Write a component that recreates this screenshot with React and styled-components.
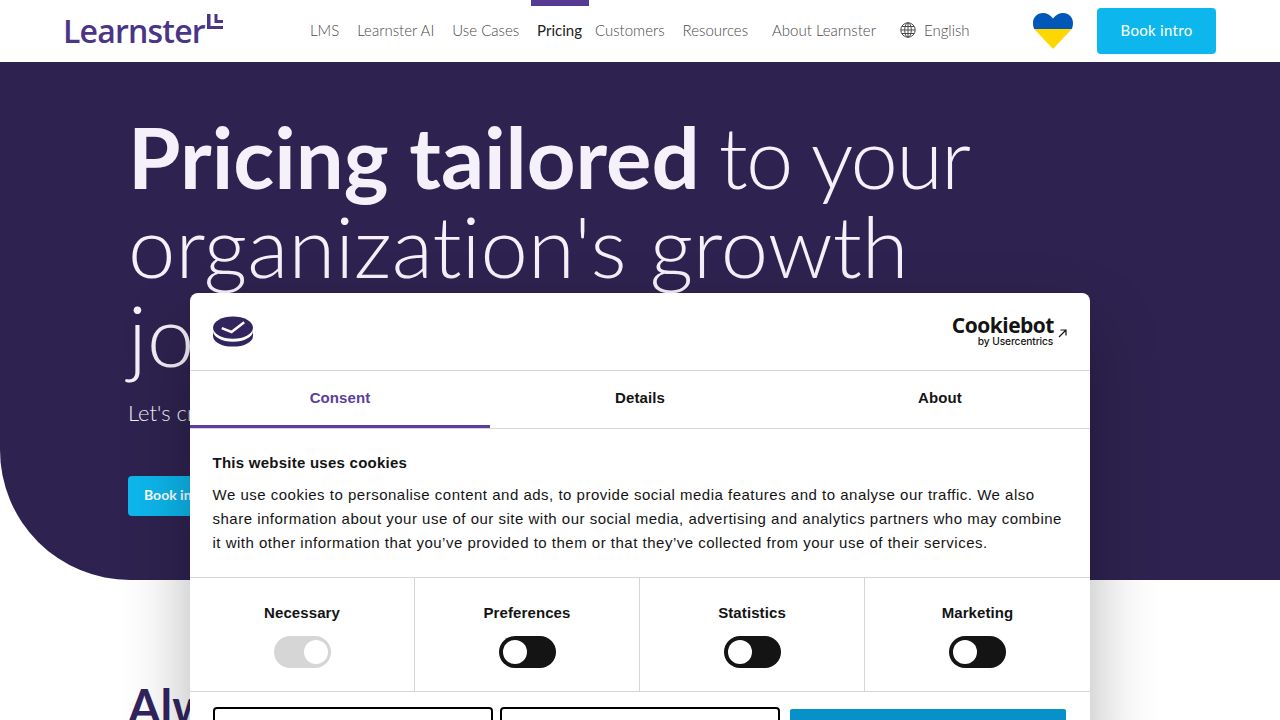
import React from "react";
import styled, { createGlobalStyle } from "styled-components";

const GlobalStyle = createGlobalStyle`
  html, body {
    margin: 0;
    padding: 0;
    height: 100%;
    overflow: hidden;
    background: #fff;
    font-family: "Lato", "Open Sans", sans-serif;
    font-variant-ligatures: none;
  }
  * {
    box-sizing: border-box;
  }
`;

const navItems = [
  { label: "LMS" },
  { label: "Learnster AI" },
  { label: "Use Cases" },
  { label: "Pricing", active: true },
  { label: "Customers" },
  { label: "Resources" },
  { label: "About Learnster", wide: true },
];

const tabs = [
  { label: "Consent", active: true },
  { label: "Details" },
  { label: "About" },
];

const consents = [
  { label: "Necessary", locked: true },
  { label: "Preferences" },
  { label: "Statistics" },
  { label: "Marketing" },
];

const LogoMark = () => (
  <MarkSvg width="16" height="15" viewBox="0 0 16 15">
    <path d="M0 0h3.500v12H16v3H0z" fill="#4b3586" />
    <path d="M7.500 0h3v6H16v3H7.500z" fill="#4b3586" />
  </MarkSvg>
);

const GlobeIcon = () => (
  <svg width="16" height="16" viewBox="0 0 16 16" fill="none" stroke="#4a4a4a" strokeWidth="1">
    <circle cx="8" cy="8" r="7.200" />
    <ellipse cx="8" cy="8" rx="3.300" ry="7.200" />
    <path d="M8 .8v14.400M.8 8h14.400M1.800 4.500h12.400M1.800 11.500h12.400" />
  </svg>
);

const HeartFlag = () => (
  <svg width="40" height="36" viewBox="0 0 40 36">
    <path
      d="M20 5.500C17 1.500 13.500 0 10 0 4 0 0 4.500 0 10c0 2.500.5 4.300 1.200 6H38.800c.7-1.700 1.200-3.500 1.200-6C40 4.500 36 0 30 0c-3.500 0-7 1.500-10 5.500z"
      fill="#0057b8"
    />
    <path d="M1.200 16H38.800L20 36z" fill="#ffd700" />
  </svg>
);

const CookieMark = () => (
  <svg width="40" height="31" viewBox="0 0 41 31">
    <path d="M0 15v5c0 6 9 11 20.500 11S41 26 41 20v-5c0 6-9 11-20.500 11S0 21 0 15z" fill="#32245f" />
    <ellipse cx="20.500" cy="11.500" rx="20.500" ry="11.500" fill="#32245f" />
    <path d="M9 12l10 4L32 6" fill="none" stroke="#fff" strokeWidth="2.500" />
  </svg>
);

const App = () => (
  <Page>
    <GlobalStyle />
    <Header>
      <Logo>
        <LogoText>Learnster</LogoText>
        <LogoMark />
      </Logo>
      <Nav>
        {navItems.map((item) => (
          <NavLink key={item.label} $active={item.active} $wide={item.wide}>
            {item.label}
          </NavLink>
        ))}
      </Nav>
      <Language>
        <GlobeIcon />
        <span>English</span>
      </Language>
      <Flag>
        <HeartFlag />
      </Flag>
      <HeaderButton>Book intro</HeaderButton>
    </Header>
    <Hero>
      <HeroTitle>
        <strong>Pricing tailored</strong> <TitleTail>to your</TitleTail> organization's growth journey
      </HeroTitle>
      <HeroText>Let's create a plan that fits your needs</HeroText>
      <HeroButton>Book intro</HeroButton>
    </Hero>
    <Section>
      <SectionTitle>Always included</SectionTitle>
    </Section>
    <Dialog>
      <DialogTop>
        <CookieMark />
        <Brand>
          <BrandName>
            Cookiebot
            <BrandArrow width="9" height="9" viewBox="0 0 9 9" fill="none" stroke="#141414" strokeWidth="1.200">
              <path d="M1 8l7-7M2.500 1H8v5.500" />
            </BrandArrow>
          </BrandName>
          <BrandSub>by Usercentrics</BrandSub>
        </Brand>
      </DialogTop>
      <Tabs>
        {tabs.map((tab) => (
          <Tab key={tab.label} $active={tab.active}>
            {tab.label}
          </Tab>
        ))}
      </Tabs>
      <DialogBody>
        <BodyTitle>This website uses cookies</BodyTitle>
        <BodyText>
          We use cookies to personalise content and ads, to provide social media features and to
          analyse our traffic. We also share information about your use of our site with our social
          media, advertising and analytics partners who may combine it with other information that
          you’ve provided to them or that they’ve collected from your use of their services.
        </BodyText>
      </DialogBody>
      <Consents>
        {consents.map((c) => (
          <ConsentCell key={c.label}>
            <ConsentLabel>{c.label}</ConsentLabel>
            <Toggle $locked={c.locked} />
          </ConsentCell>
        ))}
      </Consents>
      <Actions>
        <OutlineButton>Deny</OutlineButton>
        <OutlineButton>Customize</OutlineButton>
        <AllowButton>Allow all</AllowButton>
      </Actions>
    </Dialog>
  </Page>
);

export default App;

const Page = styled.div`
  width: 1280px;
  height: 720px;
  overflow: hidden;
  position: relative;
`;

const Header = styled.header`
  height: 62px;
  display: flex;
  align-items: center;
  padding-left: 64px;
  background: #fff;
`;

const Logo = styled.div`
  width: 246px;
  display: flex;
  align-items: flex-start;
  margin-top: -3px;
`;

const LogoText = styled.span`
  width: 143px;
  font-family: "Open Sans", sans-serif;
  font-size: 32px;
  line-height: 33px;
  color: #4b3586;
  font-weight: 600;
  letter-spacing: -0.8px;
  margin-top: 1px;
  margin-left: -1px;
`;

const MarkSvg = styled.svg`
  margin: 1px 0 0 1px;
`;

const Nav = styled.nav`
  display: flex;
  height: 100%;
  align-items: center;
  gap: 18px;
  padding-bottom: 2px;
`;

const NavLink = styled.a`
  position: relative;
  font-size: 15px;
  font-weight: ${(p) => (p.$active ? 400 : 300)};
  color: ${(p) => (p.$active ? "#222" : "#4a4a4a")};
  margin-left: ${(p) => (p.$wide ? "6px" : "0")};
  margin-right: ${(p) => (p.$active ? "-5px" : "0")};
  &::before {
    content: "";
    display: ${(p) => (p.$active ? "block" : "none")};
    position: absolute;
    top: -21px;
    left: -6px;
    right: -7px;
    height: 6px;
    background: #553b91;
  }
`;

const Language = styled.div`
  display: flex;
  align-items: center;
  gap: 8px;
  margin-left: 24px;
  padding-bottom: 2px;
  width: 133px;
  font-size: 15px;
  font-weight: 300;
  color: #4a4a4a;
`;

const Flag = styled.div`
  width: 64px;
  display: flex;
`;

const HeaderButton = styled.button`
  width: 119px;
  height: 46px;
  padding: 0 0 2px;
  border: 0;
  border-radius: 4px;
  background: #0db7ed;
  color: #fff;
  font-family: inherit;
  font-size: 15px;
  letter-spacing: 0.3px;
`;

const Hero = styled.section`
  height: 518px;
  padding: 50px 0 0 128px;
  background: #2e2350;
  border-bottom-left-radius: 130px;
  color: #f5f1fa;
`;

const HeroTitle = styled.h1`
  margin: 0;
  width: 900px;
  font-size: 85px;
  line-height: 89px;
  font-weight: 300;
  strong {
    font-weight: 700;
  }
`;

const TitleTail = styled.span`
  letter-spacing: -1.8px;
  margin-left: -4px;
`;

const HeroText = styled.p`
  margin: 19px 0 0;
  font-size: 22px;
  line-height: 30px;
  font-weight: 300;
`;

const HeroButton = styled.button`
  margin-top: 48px;
  width: 150px;
  height: 40px;
  border: 0;
  border-radius: 4px;
  background: #0db7ed;
  color: #fff;
  font-family: inherit;
  font-size: 14px;
  font-weight: 700;
  text-align: left;
  padding: 0 0 3px 16px;
`;

const Section = styled.section`
  padding: 98px 0 0 128px;
`;

const SectionTitle = styled.h2`
  margin: 0;
  font-size: 47px;
  line-height: 56px;
  font-weight: 700;
  color: #32245f;
`;

const Dialog = styled.div`
  position: absolute;
  left: 190px;
  top: 293px;
  width: 900px;
  background: #fff;
  border-radius: 8px;
  box-shadow: 0 32px 68px rgba(0, 0, 0, 0.3);
  font-family: "Liberation Sans", Arial, sans-serif;
  color: #141414;
`;

const DialogTop = styled.div`
  height: 77px;
  padding: 23px 23px 0 23px;
  display: flex;
  justify-content: space-between;
  align-items: flex-start;
`;

const Brand = styled.div`
  display: flex;
  flex-direction: column;
  align-items: flex-start;
  color: #141414;
`;

const BrandName = styled.div`
  display: flex;
  align-items: flex-end;
  gap: 4px;
  margin-top: -1px;
  font-family: "Open Sans", sans-serif;
  font-size: 21px;
  line-height: 20px;
  font-weight: 700;
  letter-spacing: -0.5px;
`;

const BrandArrow = styled.svg`
  margin-bottom: -3px;
`;

const BrandSub = styled.div`
  font-family: "Inter", sans-serif;
  font-size: 10.200px;
  line-height: 12px;
  margin: 0 0 0 26px;
  font-weight: 500;
  letter-spacing: -0.1px;
`;

const Tabs = styled.div`
  display: flex;
  height: 59px;
  border-top: 1px solid #d6d6d6;
  border-bottom: 1px solid #d6d6d6;
`;

const Tab = styled.div`
  flex: 1;
  display: flex;
  align-items: center;
  justify-content: center;
  padding-bottom: 2px;
  font-size: 15px;
  font-weight: 700;
  letter-spacing: 0.1px;
  color: ${(p) => (p.$active ? "#5a3f9e" : "#141414")};
  border-bottom: 3px solid ${(p) => (p.$active ? "#5a3f9e" : "transparent")};
`;

const DialogBody = styled.div`
  height: 148px;
  padding: 24px 23px 0 22.500px;
`;

const BodyTitle = styled.div`
  font-size: 15px;
  line-height: 20px;
  font-weight: 700;
  letter-spacing: 0.25px;
`;

const BodyText = styled.p`
  margin: 10px 0 0;
  font-size: 15px;
  line-height: 24px;
  letter-spacing: 0.5px;
`;

const Consents = styled.div`
  display: grid;
  grid-template-columns: repeat(4, 1fr);
  height: 115px;
  border-top: 1px solid #d6d6d6;
  border-bottom: 1px solid #d6d6d6;
`;

const ConsentCell = styled.div`
  display: flex;
  flex-direction: column;
  align-items: center;
  padding-top: 25px;
  border-right: 1px solid #d6d6d6;
  &:last-child {
    border-right: 0;
  }
`;

const ConsentLabel = styled.div`
  font-size: 15px;
  line-height: 20px;
  font-weight: 700;
  letter-spacing: 0.1px;
`;

const Toggle = styled.span`
  position: relative;
  width: 57px;
  height: 32px;
  margin-top: 13px;
  border-radius: 16px;
  background: ${(p) => (p.$locked ? "#d6d6d6" : "#141414")};
  &::after {
    content: "";
    position: absolute;
    top: 4px;
    left: ${(p) => (p.$locked ? "30px" : "4px")};
    width: 24px;
    height: 24px;
    border-radius: 50%;
    background: #fff;
  }
`;

const Actions = styled.div`
  display: flex;
  padding: 15px 24px 0 23px;
  align-items: flex-start;
`;

const OutlineButton = styled.button`
  width: 280px;
  height: 50px;
  margin-right: 7px;
  border: 2px solid #000;
  border-radius: 4px;
  background: #fff;
  color: #141414;
  font-family: inherit;
  font-size: 15px;
  font-weight: 700;
`;

const AllowButton = styled.button`
  width: 276px;
  height: 48px;
  margin: 2px 0 0 3px;
  border: 0;
  border-radius: 2px;
  background: #0891c9;
  color: #fff;
  font-family: inherit;
  font-size: 15px;
  font-weight: 700;
`;
